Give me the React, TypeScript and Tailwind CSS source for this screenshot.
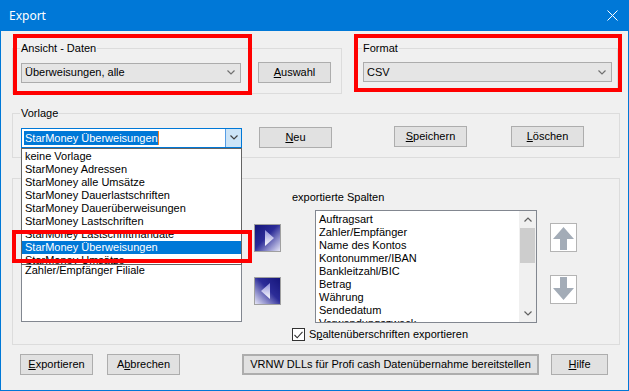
import React from "react";

const Chevron = ({ color = "#707070", up = false }: { color?: string; up?: boolean }) => (
  <svg width="8" height="5" viewBox="0 0 8 5" className="shrink-0">
    <path
      d={up ? "M0.5 4.5 L4 1 L7.5 4.5" : "M0.5 0.5 L4 4 L7.5 0.5"}
      fill="none"
      stroke={color}
      strokeWidth="1.2"
    />
  </svg>
);

const Btn = ({
  children,
  className = "",
}: {
  children: React.ReactNode;
  className?: string;
}) => (
  <div
    className={`flex items-center justify-center h-[21px] bg-[#e1e1e1] border border-[#adadad] ${className}`}
  >
    {children}
  </div>
);

const U = ({ children }: { children: React.ReactNode }) => (
  <span className="underline underline-offset-[1px]">{children}</span>
);

// blue "move" arrows between the two lists
const MoveArrow = ({ dir }: { dir: "right" | "left" }) => (
  <svg width="27" height="28" viewBox="0 0 27 28">
    <defs>
      <linearGradient id={`bg-${dir}`} x1={dir === "right" ? "0" : "1"} y1="0" x2={dir === "right" ? "1" : "0"} y2="1">
        <stop offset="0" stopColor="#15157a" />
        <stop offset="0.45" stopColor="#2c2c98" />
        <stop offset="1" stopColor="#e6e6f8" />
      </linearGradient>
      <linearGradient id={`tri-${dir}`} x1="0" y1="0" x2="0" y2="1">
        <stop offset="0" stopColor="#8e8ed8" />
        <stop offset="1" stopColor="#ffffff" />
      </linearGradient>
    </defs>
    <rect x="0.5" y="0.5" width="26" height="27" fill="#c8c8c8" stroke="#a0a0a0" />
    <rect x="1" y="1" width="25" height="26" fill={`url(#bg-${dir})`} />
    {dir === "right" ? (
      <polygon points="11,6 20,14 11,22" fill={`url(#tri-${dir})`} />
    ) : (
      <polygon points="16,6 7,14 16,22" fill={`url(#tri-${dir})`} />
    )}
  </svg>
);

// grey up / down arrows for ordering
const OrderArrow = ({ dir }: { dir: "up" | "down" }) => (
  <svg width="27" height="29" viewBox="0 0 27 29">
    <rect x="0.5" y="0.5" width="26" height="28" fill="#ffffff" stroke="#b4b4b4" />
    {dir === "up" ? (
      <path d="M13.5 4 L24 16 L17 16 L17 27 L10 27 L10 16 L3 16 Z" fill="#a3acb7" />
    ) : (
      <path d="M13.5 25 L24 13 L17 13 L17 2 L10 2 L10 13 L3 13 Z" fill="#a3acb7" />
    )}
  </svg>
);

const vorlagen = [
  "keine Vorlage",
  "StarMoney Adressen",
  "StarMoney alle Umsätze",
  "StarMoney Dauerlastschriften",
  "StarMoney Dauerüberweisungen",
  "StarMoney Lastschriften",
  "StarMoney Lastschriftmandate",
  "StarMoney Überweisungen",
  "StarMoney Umsätze",
];

// rows hidden under the open dropdown are left blank
const verfuegbar = ["", "", "", "", "Zahler/Empfänger Filiale"];

const exportiert = [
  "Auftragsart",
  "Zahler/Empfänger",
  "Name des Kontos",
  "Kontonummer/IBAN",
  "Bankleitzahl/BIC",
  "Betrag",
  "Währung",
  "Sendedatum",
  "Verwendungszweck",
];

export default function App() {
  return (
    <div className="relative w-[629px] h-[391px] flex flex-col bg-[#0078d7] text-black text-[11px] leading-[13px] font-['Liberation_Sans',Arial,sans-serif]">
      {/* Title bar */}
      <div className="h-[31px] shrink-0 flex items-center justify-between pl-[9px] pr-[11px] text-white text-[12px] font-['Noto_Sans','Open_Sans',sans-serif]">
        <span>Export</span>
        <svg width="11" height="11" viewBox="0 0 11 11">
          <path d="M0.5 0.5 L10.5 10.5 M10.5 0.5 L0.5 10.5" stroke="#ffffff" strokeWidth="1" />
        </svg>
      </div>

      {/* Body */}
      <div className="flex-1 mx-[1px] mb-[1px] bg-[#f0f0f0] pl-[11px] pt-[11px] flex flex-col">
        {/* Row 1 */}
        <div className="flex items-start">
          <fieldset className="w-[330px] h-[52px] border border-[#dcdcdc]">
            <legend className="ml-[7px] px-[1px]">Ansicht - Daten</legend>
            <div className="flex items-center gap-[17px] pl-[8px] pt-[7px]">
              <div className="flex items-center w-[220px] h-[20px] bg-[#e5e5e5] border border-[#acacac] pl-[3px] pr-[5px]">
                <span className="flex-1">Überweisungen, alle</span>
                <Chevron />
              </div>
              <Btn className="w-[73px]">
                <U>A</U>uswahl
              </Btn>
            </div>
          </fieldset>

          <fieldset className="ml-[14px] w-[262px] h-[50px] border border-[#dcdcdc]">
            <legend className="ml-[5px] px-[1px]">Format</legend>
            <div className="pl-[6px] pt-[7px]">
              <div className="flex items-center w-[249px] h-[20px] bg-[#e5e5e5] border border-[#acacac] pl-[3px] pr-[5px]">
                <span className="flex-1">CSV</span>
                <Chevron />
              </div>
            </div>
          </fieldset>
        </div>

        {/* Row 2: Vorlage */}
        <fieldset className="mt-[13px] w-[608px] h-[51px] border border-[#dcdcdc]">
          <legend className="ml-[7px] px-[1px]">Vorlage</legend>
          <div className="flex items-center pl-[8px] pt-[7px]">
            <div className="flex items-center w-[221px] h-[20px] bg-white border border-[#0078d7]">
              <div className="flex-1 flex items-center pl-[2px]">
                <span className="bg-[#0078d7] text-white h-[14px] leading-[14px] pl-[1px]">
                  StarMoney Überweisungen
                </span>
                <span className="w-[1px] h-[14px] bg-[#f08020]" />
              </div>
              <div className="w-[16px] h-full flex items-center justify-center bg-[#cce4f7] border-l border-[#569de5]">
                <Chevron color="#404040" />
              </div>
            </div>
            <Btn className="ml-[17px] w-[73px]">
              <U>N</U>eu
            </Btn>
            <Btn className="ml-[62px] w-[73px] -mt-[2px]">
              <U>S</U>peichern
            </Btn>
            <Btn className="ml-[44px] w-[73px] -mt-[2px]">
              <U>L</U>öschen
            </Btn>
          </div>
        </fieldset>

        {/* Row 3: columns */}
        <fieldset className="mt-[20px] w-[608px] h-[167px] border border-[#dcdcdc]">
          <div className="flex pl-[8px] pt-[12px]">
            <div className="flex flex-col w-[221px]">
              <div className="h-[13px]" />
              <div className="mt-[6px] h-[112px] bg-white border border-[#828790] pt-[1px] pl-[3px]">
                {verfuegbar.map((s, i) => (
                  <div key={i} className="h-[13px]">
                    {s}
                  </div>
                ))}
              </div>
            </div>

            <div className="ml-[12px] flex flex-col pt-[33px] gap-[25px]">
              <MoveArrow dir="right" />
              <MoveArrow dir="left" />
            </div>

            <div className="ml-[11px] flex flex-col">
              <span>exportierte Spalten</span>
              <div className="ml-[23px] mt-[6px] w-[222px] h-[113px] bg-white border border-[#828790] flex overflow-hidden">
                <div className="flex-1 pl-[3px] pt-[2px] overflow-hidden">
                  {exportiert.map((s) => (
                    <div key={s} className="h-[13px] whitespace-nowrap">
                      {s}
                    </div>
                  ))}
                </div>
                <div className="w-[17px] h-full flex flex-col bg-[#f0f0f0]">
                  <div className="h-[17px] flex items-center justify-center">
                    <Chevron up color="#606060" />
                  </div>
                  <div className="mx-[1px] h-[35px] bg-[#cdcdcd]" />
                  <div className="flex-1" />
                  <div className="h-[17px] flex items-center justify-center">
                    <Chevron color="#606060" />
                  </div>
                </div>
              </div>
              <div className="mt-[5px] flex items-center gap-[4px]">
                <div className="w-[13px] h-[13px] bg-white border border-[#333333] flex items-center justify-center">
                  <svg width="9" height="8" viewBox="0 0 9 8">
                    <path d="M0.5 4 L3.2 6.8 L8.5 0.8" fill="none" stroke="#333333" strokeWidth="1.1" />
                  </svg>
                </div>
                <span>
                  S<U>p</U>altenüberschriften exportieren
                </span>
              </div>
            </div>

            <div className="ml-[13px] flex flex-col pt-[32px] gap-[23px]">
              <OrderArrow dir="up" />
              <OrderArrow dir="down" />
            </div>
          </div>
        </fieldset>

        {/* Bottom buttons */}
        <div className="mt-[9px] flex pl-[8px]">
          <Btn className="w-[73px]">
            <U>E</U>xportieren
          </Btn>
          <Btn className="ml-[14px] w-[73px]">
            A<U>b</U>brechen
          </Btn>
          <Btn className="ml-[62px] w-[297px] border-2 border-[#0078d7]">
            VRNW DLLs für Profi cash Datenübernahme bereitstellen
          </Btn>
          <Btn className="ml-[12px] w-[57px]">
            <U>H</U>ilfe
          </Btn>
        </div>
      </div>

      {/* Open dropdown of the Vorlage combo */}
      <div className="absolute left-[21px] top-[148px] w-[221px] h-[117px] bg-white border border-[#646464] pt-[1px] overflow-hidden">
        {vorlagen.map((v) => (
          <div
            key={v}
            className={`h-[13px] pl-[3px] whitespace-nowrap ${
              v === "StarMoney Überweisungen" ? "bg-[#0078d7] text-white" : ""
            }`}
          >
            {v}
          </div>
        ))}
      </div>

      {/* Red annotation frames */}
      <div className="absolute left-[13px] top-[34px] w-[239px] h-[61px] border-[4px] border-[#ff0000]" />
      <div className="absolute left-[354px] top-[34px] w-[268px] h-[58px] border-[4px] border-[#ff0000]" />
      <div className="absolute left-[12px] top-[230px] w-[240px] h-[33px] border-[4px] border-[#ff0000]" />
    </div>
  );
}
